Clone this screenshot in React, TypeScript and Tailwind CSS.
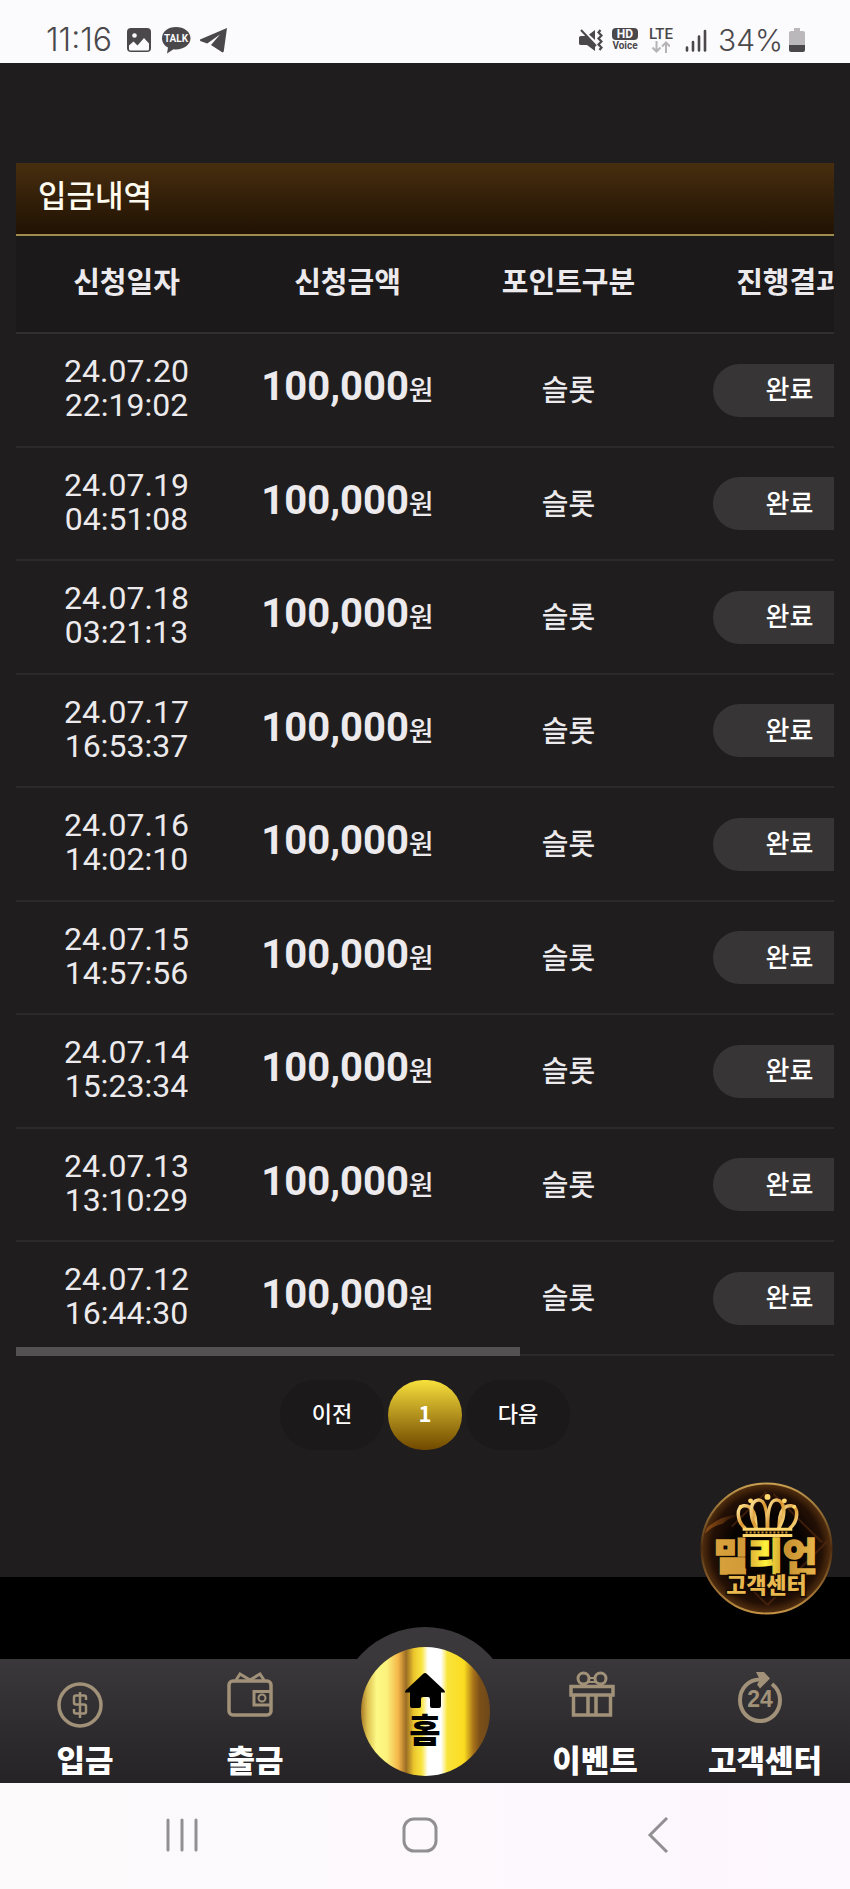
import React from "react";

const rows = [
  ["24.07.20", "22:19:02"],
  ["24.07.19", "04:51:08"],
  ["24.07.18", "03:21:13"],
  ["24.07.17", "16:53:37"],
  ["24.07.16", "14:02:10"],
  ["24.07.15", "14:57:56"],
  ["24.07.14", "15:23:34"],
  ["24.07.13", "13:10:29"],
  ["24.07.12", "16:44:30"],
];

const headings = ["신청일자", "신청금액", "포인트구분", "진행결과"];

function StatusBar() {
  return (
    <header className="flex h-[63px] items-end justify-between bg-[#fbfafc] pr-[45px] pl-[46px] font-[Roboto,'Noto_Sans_CJK_KR',sans-serif] text-[#4a484b]">
      <div className="flex h-[46px] items-center">
        <span className="w-[81px] font-[Inter,sans-serif] text-[32px] leading-8 font-light">11:16</span>
        <svg viewBox="0 0 24 24" className="size-6" aria-hidden="true">
          <rect width="24" height="24" rx="4" fill="#4a484b" />
          <circle cx="7.5" cy="7.5" r="2.3" fill="#fbfafc" />
          <path d="M2 17.5l4.500-4 4 4L17 10l5 5.500V21a1.500 1.500 0 0 1-1.500 1.500h-17A1.500 1.500 0 0 1 2 21z" fill="#fbfafc" />
        </svg>
        <svg viewBox="0 0 30 28" className="ml-[10px] h-7 w-[30px]" aria-hidden="true">
          <path d="M15 1C7 1 1 5.800 1 12.200c0 4.200 2.500 7.600 6 9.300L6 27.500l6.500-4.300c.8.1 1.700.2 2.500.2 8 0 14.500-4.800 14.500-11.200S23 1 15 1z" fill="#4a484b" />
          <text x="15" y="16" textAnchor="middle" fontSize="10" fontWeight="700" fill="#fbfafc">TALK</text>
        </svg>
        <svg viewBox="0 0 29 26" className="ml-2 h-[26px] w-[29px]" aria-hidden="true">
          <path d="M28 1L1 12.500l.2 1.500 7 2.500L21 7.500 12 18l11.500 7.500 1.200-.8z" fill="#4a484b" />
        </svg>
      </div>
      <div className="flex h-[46px] items-center">
        <svg viewBox="0 0 25 24" className="h-6 w-[25px]" aria-hidden="true">
          <path d="M1 9.500Q1 8 3 8h5l9 9.500V23l-8-6H3q-2 0-2-1.500zM11 6.500L17 2v10z" fill="#4a484b" />
          <path d="M3 2l15 16" fill="none" stroke="#4a484b" strokeWidth="2" />
          <path d="M22.500 2l-2 2.500 3 3-3 3 3 3-3 3 3 3-2 2.500" fill="none" stroke="#4a484b" strokeWidth="2.200" />
        </svg>
        <span className="ml-2 flex w-7 flex-col items-center">
          <span className="flex h-3 w-[26px] items-center justify-center rounded-sm bg-[#4a484b] text-[12px] leading-3 font-bold text-[#fbfafc]">HD</span>
          <span className="text-[10px] leading-3 font-bold">Voice</span>
        </span>
        <span className="ml-2 flex w-7 flex-col items-center">
          <span className="text-[15px] leading-[14px] font-medium">LTE</span>
          <svg viewBox="0 0 18 12" className="h-3 w-[18px]" fill="none" stroke="#b5b3b6" strokeWidth="2" aria-hidden="true">
            <path d="M4.500 0v10M.5 6.500l4 4 4-4M14 12V1.500M10 5.500l4-4 4 4" />
          </svg>
        </span>
        <svg viewBox="0 0 22 23" className="ml-2.5 h-[23px] w-[22px]" fill="none" stroke="#4a484b" strokeWidth="2.600" strokeLinecap="round" aria-hidden="true">
          <path d="M2 18.500v3M8 13v8.500M14 7.500v14" />
          <path d="M20 2v19.500" />
        </svg>
        <span className="ml-[11px] w-[71px] font-[Inter,sans-serif] text-[30px] leading-8 font-light">34%</span>
        <svg viewBox="0 0 16 24" className="h-6 w-4" aria-hidden="true">
          <path d="M5 0h6v3h3a2 2 0 0 1 2 2v13H0V5a2 2 0 0 1 2-2h3z" fill="#bab8bb" />
          <path d="M0 17h16v5a2 2 0 0 1-2 2H2a2 2 0 0 1-2-2z" fill="#4a484b" />
        </svg>
      </div>
    </header>
  );
}

function History() {
  return (
    <section className="mx-4 mt-[100px]">
      <h1 className="h-[73px] border-b-2 border-[#a08c4c] bg-linear-to-b from-[#472e0f] to-[#211204] px-[22px] pt-[11px] text-[31px] leading-10 font-medium text-[#fffbee]">
        입금내역
      </h1>
      <div className="relative">
        <div className="overflow-x-auto [scrollbar-width:none]">
          <table className="w-[884px] table-fixed border-collapse text-[#eceaec]">
            <thead>
              <tr className="h-[97px] border-b-2 border-[#302e30] bg-[#1b191a]">
                {headings.map((h) => (
                  <th key={h} scope="col" className="p-0 pb-2 text-[29px] leading-10 font-bold">{h}</th>
                ))}
              </tr>
            </thead>
            <tbody>
              {rows.map(([date, time]) => (
                <tr key={date} className="h-[113px] border-b-2 border-[#2c2a2b] odd:h-[114px]">
                  <td className="p-0 pb-1 text-center font-[Roboto,sans-serif] text-[32px] leading-[34px]">
                    {date}
                    <br />
                    {time}
                  </td>
                  <td className="p-0 pb-1 text-center">
                    <span className="inline-flex items-baseline leading-[44px]">
                      <span className="font-[Roboto,sans-serif] text-[40px] font-bold">100,000</span>
                      <span className="text-[27px] font-medium">원</span>
                    </span>
                  </td>
                  <td className="p-0 pb-1 text-center text-[29px] leading-10 font-medium">슬롯</td>
                  <td className="p-0">
                    <span className="mx-auto flex h-[53px] w-[154px] items-center justify-center rounded-full bg-[#373536] pb-1 text-[26px] leading-10 font-medium text-white">
                      완료
                    </span>
                  </td>
                </tr>
              ))}
            </tbody>
          </table>
        </div>
        <div className="absolute bottom-0 left-0 h-[9px] w-[504px] bg-[#545153]" />
      </div>
      <nav className="mt-6 flex justify-center gap-1 text-[22px] leading-8 font-medium text-white" aria-label="페이지">
        <button className="h-[70px] w-[104px] rounded-full bg-[#1b191a] pb-1.5">이전</button>
        <button className="h-[70px] w-[74px] rounded-full bg-linear-to-b from-[#f8e13c] to-[#704900] pb-1.5 font-bold">1</button>
        <button className="h-[70px] w-[104px] rounded-full bg-[#1b191a] pb-1.5">다음</button>
      </nav>
    </section>
  );
}

function SupportBadge() {
  return (
    <a href="#support" aria-label="밀리언 고객센터" className="absolute right-[17px] bottom-[44px] size-[133px]">
      <svg viewBox="0 0 134 134" className="size-full font-['Noto_Sans_CJK_KR',sans-serif]">
        <defs>
          <radialGradient id="orb" cx=".5" cy=".5" r=".5">
            <stop offset=".55" stopColor="#070301" />
            <stop offset=".85" stopColor="#241005" />
            <stop offset="1" stopColor="#54300f" />
          </radialGradient>
          <linearGradient id="rim" x1="0" y1="0" x2="0" y2="1">
            <stop offset="0" stopColor="#c8a050" />
            <stop offset=".5" stopColor="#4d2c10" />
            <stop offset="1" stopColor="#c39245" />
          </linearGradient>
          <linearGradient id="glow" x1="0" y1="0" x2="1" y2="0">
            <stop offset="0" stopColor="#8a4a14" />
            <stop offset="1" stopColor="#8a4a14" stopOpacity="0" />
          </linearGradient>
          <linearGradient id="gold" x1="0" y1="0" x2="1" y2="1">
            <stop offset="0" stopColor="#ffe9a0" />
            <stop offset=".5" stopColor="#d9952f" />
            <stop offset="1" stopColor="#ffe28a" />
          </linearGradient>
          <linearGradient id="word" x1="0" y1="0" x2="1" y2="0">
            <stop offset="0" stopColor="#d9a23c" />
            <stop offset=".3" stopColor="#d29a38" />
            <stop offset=".5" stopColor="#fff13c" />
            <stop offset=".7" stopColor="#c89030" />
            <stop offset="1" stopColor="#e8b84c" />
          </linearGradient>
        </defs>
        <circle cx="67" cy="67" r="65.500" fill="url(#orb)" stroke="url(#rim)" strokeWidth="2" />
        <path d="M7 46q16-14 34-13-14 4-18 9-10 2-18 10z" fill="url(#glow)" />
        <path d="M74 12l49 49M67 10l-35 35M92 96l36-36M68 124l-28-28M68 124l28-28" stroke="#5a2c12" strokeWidth="2" fill="none" opacity=".6" />
        <g fill="none" stroke="url(#gold)" strokeWidth="3.500">
          <path d="M46 47C37 40 36 25 44 24c10-1 13 11 12 23" />
          <path d="M90 47c9-7 10-22 2-23-10-1-13 11-12 23" />
          <path d="M57 47C49 34 50 19 59 18c8 0 9 16 9 29" />
          <path d="M79 47c8-13 7-28-2-29-8 0-9 16-9 29" />
        </g>
        <g fill="#ffd76c">
          <circle cx="68" cy="15" r="3" />
          <circle cx="51" cy="19" r="2.500" />
          <circle cx="85" cy="19" r="2.500" />
          <circle cx="41" cy="25" r="2" />
          <circle cx="95" cy="25" r="2" />
          <path d="M43 46h50v3H43zM43 52.500h50v3H43z" />
        </g>
        <path d="M46 50.800h44" stroke="#d39b38" strokeWidth="2" strokeDasharray="2 2" />
        <text x="66" y="89" textAnchor="middle" fontSize="38" fontWeight="900" fill="url(#word)" stroke="url(#word)" strokeWidth="1.500">밀리언</text>
        <text x="67" y="112" textAnchor="middle" fontSize="22" fontWeight="900" fill="#e9b84e" stroke="#150900" strokeWidth="3" paintOrder="stroke">고객센터</text>
      </svg>
    </a>
  );
}

const icon = "fill-none stroke-[#a19179]";

function DepositIcon() {
  return (
    <svg viewBox="0 0 46 46" className={`${icon} size-[46px] self-end`} strokeWidth="3.500" aria-hidden="true">
      <circle cx="23" cy="23" r="21" />
      <path d="M29 18v-2.500a2 2 0 0 0-2-2h-8a2 2 0 0 0-2 2v5a2 2 0 0 0 2 2h8a2 2 0 0 1 2 2v5a2 2 0 0 1-2 2h-8a2 2 0 0 1-2-2V27M23 10v26" strokeWidth="2.500" />
    </svg>
  );
}

function WithdrawIcon() {
  return (
    <svg viewBox="0 0 46 46" className={`${icon} size-[46px]`} strokeWidth="3.500" aria-hidden="true">
      <rect x="2" y="10" width="42" height="34" rx="4" />
      <path d="M9 9l4-6 10 6 10-6 4 6M44 20.500H27V34h17" strokeWidth="3" />
      <circle cx="35" cy="27" r="3.500" strokeWidth="2" />
    </svg>
  );
}

function EventIcon() {
  return (
    <svg viewBox="0 0 46 46" className={`${icon} ml-1 size-[46px]`} strokeWidth="3.500" aria-hidden="true">
      <path d="M2 15.500h42v8.500H2zM4.500 24v20h37V24M19 24v20M27 24v20" />
      <circle cx="14.500" cy="7.500" r="5.500" strokeWidth="3" />
      <circle cx="31.500" cy="7.500" r="5.500" strokeWidth="3" />
      <path d="M20 7h6M20 11h6" strokeWidth="2" />
    </svg>
  );
}

function SupportIcon() {
  return (
    <svg viewBox="0 0 46 52" className={`${icon} h-[52px] w-[46px]`} strokeWidth="4" aria-hidden="true">
      <path d="M24 8.500C12 8 3 17 3 29s9 21 20 21 20-9 20-21c0-6-3-12-8-16" />
      <path d="M19 1h8l6 6.500-10 10-3-4 3-4.500z" fill="#a19179" stroke="none" />
      <text x="23" y="36" textAnchor="middle" fontSize="23" fontFamily="Liberation Sans" fontWeight="700" fill="#a19179" stroke="none">24</text>
    </svg>
  );
}

function TabLink({ label, children }: { label: string; children: React.ReactNode }) {
  return (
    <a href="#tab" className="flex flex-1 flex-col items-center justify-between pt-3 pb-[3px] text-[31px] leading-[42px] font-black text-white">
      <span className="flex h-[57px] items-start pr-[10px]">{children}</span>
      {label}
    </a>
  );
}

function TabBar() {
  return (
    <nav className="relative flex h-[124px] bg-linear-to-b from-[#3a383a] to-[#252325]" aria-label="메뉴">
      <div className="absolute -top-8 left-1/2 h-8 w-[176px] -translate-x-1/2 overflow-hidden">
        <div className="size-[176px] rounded-full bg-[#3a383a]" />
      </div>
      <TabLink label="입금"><DepositIcon /></TabLink>
      <TabLink label="출금"><WithdrawIcon /></TabLink>
      <div className="flex flex-1 justify-center">
        <a
          href="#home"
          className="absolute -top-3 flex size-[129px] flex-col items-center rounded-full bg-[linear-gradient(90deg,#a87a28_0%,#dcc050_5%,#fdf884_12%,#fbf27c_20%,#f4b548_29%,#9a6c24_35%,#ecc62c_41%,#f8e440_47%,#ffffff_52%,#ffffff_62%,#f9e43a_67%,#fbdc20_80%,#a8741a_87%,#7c5018_92%,#6e481a_100%)] pt-[26px] text-black"
        >
          <svg viewBox="0 0 40 36" className="h-9 w-10" aria-hidden="true">
            <path d="M20 0q1 0 2 1l17 16q1 1 1 2.500h-4V33a2 2 0 0 1-2 2h-7a2 2 0 0 1-2-2v-7a2 2 0 0 0-2-2h-5a2 2 0 0 0-2 2v7a2 2 0 0 1-2 2H7a2 2 0 0 1-2-2V19.500H0Q0 18 1 17L18 1q1-1 2-1z" />
          </svg>
          <span className="text-[34px] leading-[40px] font-black">홈</span>
        </a>
      </div>
      <TabLink label="이벤트"><EventIcon /></TabLink>
      <TabLink label="고객센터"><SupportIcon /></TabLink>
    </nav>
  );
}

function SystemBar() {
  return (
    <nav className="flex h-[106px] items-center justify-center gap-[203px] bg-linear-to-r from-[#fcfafb] to-[#fdf7fe] pr-[10px] pb-[2px]" aria-label="시스템">
      <button aria-label="최근 앱">
        <svg viewBox="0 0 34 36" className="h-9 w-[34px] fill-none stroke-[#918f92] stroke-[3]" strokeLinecap="round">
          <path d="M3 3v30M17 3v30M31 3v30" />
        </svg>
      </button>
      <button aria-label="홈 화면">
        <svg viewBox="0 0 36 36" className="size-9 fill-none stroke-[#918f92] stroke-[3]">
          <rect x="2" y="2" width="32" height="32" rx="10" />
        </svg>
      </button>
      <button aria-label="뒤로">
        <svg viewBox="0 0 34 36" className="h-9 w-[34px] fill-none stroke-[#918f92] stroke-[3]">
          <path d="M26 1L9 18l17 17" />
        </svg>
      </button>
    </nav>
  );
}

export default function App() {
  return (
    <div className="flex min-h-screen flex-col bg-[#1f1d1e] font-['Noto_Sans_CJK_KR',sans-serif]">
      <StatusBar />
      <main className="grow">
        <History />
      </main>
      <div className="relative h-[82px] bg-black">
        <SupportBadge />
      </div>
      <TabBar />
      <SystemBar />
    </div>
  );
}
